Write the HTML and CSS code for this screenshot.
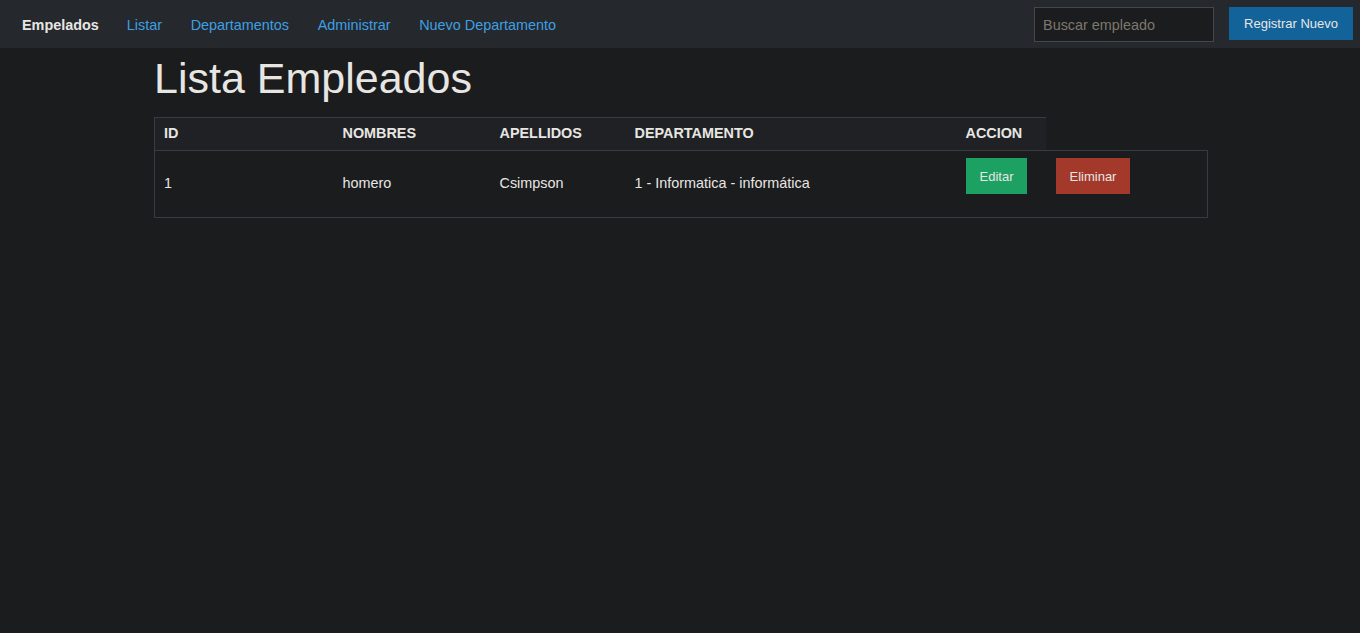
FILE: index.html
```html
<!DOCTYPE html>
<html lang="es">
<head>
<meta charset="utf-8">
<title>Lista Empleados</title>
<link rel="stylesheet" href="styles.css">
</head>
<body>
<nav class="navbar">
  <a class="brand" href="#">Empelados</a>
  <ul class="nav-links">
    <li><a href="#">Listar</a></li>
    <li><a href="#">Departamentos</a></li>
    <li><a href="#">Administrar</a></li>
    <li><a href="#">Nuevo Departamento</a></li>
  </ul>
  <form class="search">
    <input class="search-input" type="text" placeholder="Buscar empleado">
    <button class="btn btn-primary" type="button">Registrar Nuevo</button>
  </form>
</nav>
<main class="container">
  <h1 class="title">Lista Empleados</h1>
  <table class="table">
    <thead>
      <tr>
        <th class="c-id first">ID</th>
        <th class="c-nom">NOMBRES</th>
        <th class="c-ape">APELLIDOS</th>
        <th class="c-dep">DEPARTAMENTO</th>
        <th class="c-acc">ACCION</th>
      </tr>
    </thead>
    <tbody>
      <tr>
        <td class="first">1</td>
        <td>homero</td>
        <td>Csimpson</td>
        <td>1 - Informatica - informática</td>
        <td class="act"><button class="btn btn-success" type="button">Editar</button></td>
        <td class="act last"><button class="btn btn-danger" type="button">Eliminar</button></td>
      </tr>
    </tbody>
  </table>
</main>
</body>
</html>
```
FILE: styles.css
```css
* { box-sizing: border-box; }
html, body { margin: 0; padding: 0; }
body {
  background: #1b1c1e;
  color: #e8e6e3;
  font-family: "Liberation Sans", Arial, sans-serif;
  font-size: 14.4px;
  line-height: 1.5;
}
.navbar {
  display: flex;
  align-items: center;
  height: 48px;
  background: #25282c;
  padding: 0 7px 0 22px;
}
.brand {
  color: #e8e6e3;
  font-weight: bold;
  text-decoration: none;
  margin-right: 28px;
  padding-top: 3px;
}
.nav-links {
  display: flex;
  gap: 28.7px;
  list-style: none;
  margin: 0;
  padding: 3px 0 0;
  flex: 1;
}
.nav-links a {
  color: #3ea0e4;
  text-decoration: none;
}
.search {
  display: flex;
  align-items: center;
  gap: 15px;
}
.search-input {
  width: 180px;
  height: 35px;
  margin-top: 1px;
  background: #1b1c1e;
  border: 1px solid #43474c;
  color: #e8e6e3;
  font-family: inherit;
  font-size: 14.4px;
  padding: 0 8px;
  outline: none;
}
.search-input::placeholder { color: #7d786f; }
.btn {
  border: 0;
  font-family: "Liberation Sans", Arial, sans-serif;
  font-size: 13px;
  color: #e8e6e3;
  cursor: pointer;
}
.btn-primary {
  background: #13639b;
  height: 33px;
  padding: 0 15px;
  margin-top: -1px;
}
.btn-success {
  background: #1da163;
  height: 36px;
  padding: 0 14px;
}
.btn-danger {
  background: #a2392b;
  height: 36px;
  padding: 0 14px;
}
.container {
  width: 1054px;
  margin: 0 0 0 154px;
}
.title {
  font-size: 43px;
  font-weight: normal;
  line-height: 1;
  margin: 9px 0 0;
  padding: 0;
  height: 60px;
}
.table {
  border-collapse: collapse;
  width: 1054px;
}
.table th {
  text-align: left;
  font-weight: bold;
  background: #1f2124;
  border-top: 1px solid #383c40;
  padding: 0 10px;
  height: 33px;
  vertical-align: middle;
}
.table th.first { border-left: 1px solid #383c40; padding-left: 9px; }
.table td {
  border-top: 1px solid #383c40;
  border-bottom: 1px solid #383c40;
  padding: 0 10px;
  height: 67px;
  vertical-align: middle;
}
.table td.first { border-left: 1px solid #383c40; padding-left: 9px; }
.table td.last { border-right: 1px solid #383c40; }
.table td.act {
  vertical-align: top;
  padding-top: 7px;
}
.c-id { width: 178px; }
.c-nom { width: 157px; }
.c-ape { width: 135px; }
.c-dep { width: 331px; }
.c-acc { width: 90px; }
```
